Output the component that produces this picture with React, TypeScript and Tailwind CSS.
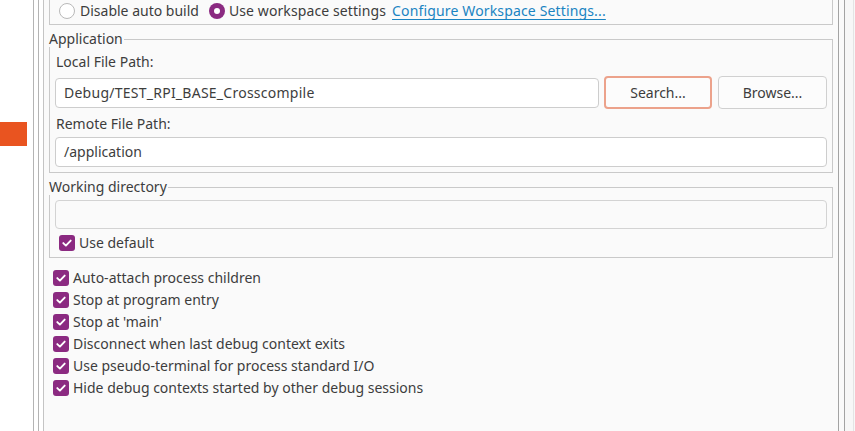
import React from "react";

function Check() {
  return (
    <span className="w-4 h-4 rounded-[3px] bg-[#8b2a81] flex items-center justify-center shrink-0">
      <svg width="12" height="12" viewBox="0 0 12 12">
        <path d="M2.3 6.1 L4.9 8.6 L9.7 3.6" stroke="white" strokeWidth="1.9" fill="none" strokeLinecap="round" strokeLinejoin="round" />
      </svg>
    </span>
  );
}

function CheckRow({ label }: { label: string }) {
  return (
    <div className="h-[22px] flex items-center pl-[4px]">
      <Check />
      <span className="ml-[4px]">{label}</span>
    </div>
  );
}

function GroupLabel({ label }: { label: string }) {
  return (
    <div className="h-[16px] flex">
      <span className="leading-[16px] whitespace-nowrap">{label}</span>
      <div className="flex-1 mt-[8px] ml-[1px] border-t border-r border-[#c9c9c9]" />
    </div>
  );
}

export default function App() {
  return (
    <div className="w-[855px] h-[431px] flex overflow-hidden bg-white text-[14px] leading-[20px] text-[#3d3d3d] font-['Noto_Sans',sans-serif]">
      <div className="w-[33px] shrink-0 bg-white pt-[122px]">
        <div className="w-[27px] h-[24px] bg-[#e95420]" />
      </div>
      <div className="w-px shrink-0 bg-[#b4b4b4]" />
      <div className="w-[4px] shrink-0 bg-white" />
      <div className="w-px shrink-0 bg-[#b4b4b4]" />
      <div className="w-[4px] shrink-0 bg-white" />
      <div className="w-px shrink-0 bg-[#c4c4c4]" />
      <div className="w-[794px] shrink-0 bg-[#fafafa] px-[5px] flex flex-col">
        {/* build settings box (clipped top) */}
        <div className="h-[25px] border-x border-b border-[#c9c9c9] flex items-center pl-[9px] pb-[2px] whitespace-nowrap">
          <span className="w-4 h-4 rounded-full border border-[#b9b9b9] bg-white shrink-0" />
          <span className="ml-[5px]">Disable auto build</span>
          <span className="ml-[10px] w-4 h-4 rounded-full bg-[#8b2a81] flex items-center justify-center shrink-0">
            <span className="w-[6px] h-[6px] rounded-full bg-white" />
          </span>
          <span className="ml-[4px] tracking-[0.1px]">Use workspace settings</span>
          <span className="ml-[6px] tracking-[0.15px] text-[#1a84c2] underline underline-offset-[3px] decoration-[#1a84c2]">
            Configure Workspace Settings...
          </span>
        </div>

        {/* Application */}
        <div className="mt-[6px]">
          <GroupLabel label="Application" />
          <div className="border-x border-b border-[#c9c9c9] pt-[5px] px-[5px] pb-[5px]">
            <div className="pl-[1px]">Local File Path:</div>
            <div className="mt-[4px] h-[33px] flex items-center">
              <div className="flex-1 h-[30px] bg-white border border-[#cdcdcd] rounded-[4px] flex items-center pl-[8px] tracking-[0.25px]">
                Debug/TEST_RPI_BASE_Crosscompile
              </div>
              <div className="ml-[5px] w-[108px] h-[33px] rounded-[4px] border-2 border-[#eca28b] bg-[#fcfcfc] flex items-center justify-center">
                Search...
              </div>
              <div className="ml-[6px] w-[109px] h-[33px] rounded-[4px] border border-[#d0d0d0] bg-[#fcfcfc] flex items-center justify-center">
                Browse...
              </div>
            </div>
            <div className="mt-[5px] pl-[1px]">Remote File Path:</div>
            <div className="mt-[3px] h-[30px] bg-white border border-[#cdcdcd] rounded-[4px] flex items-center pl-[8px]">
              /application
            </div>
          </div>
        </div>

        {/* Working directory */}
        <div className="mt-[6px]">
          <GroupLabel label="Working directory" />
          <div className="border-x border-b border-[#c9c9c9] pt-[5px] px-[5px] pb-[6px]">
            <div className="h-[29px] bg-[#fafafa] border border-[#d3d3d3] rounded-[4px]" />
            <div className="mt-[6px] h-[16px] flex items-center pl-[4px]">
              <Check />
              <span className="ml-[4px]">Use default</span>
            </div>
          </div>
        </div>

        {/* options */}
        <div className="mt-[9px] flex flex-col">
          <CheckRow label="Auto-attach process children" />
          <CheckRow label="Stop at program entry" />
          <CheckRow label="Stop at 'main'" />
          <CheckRow label="Disconnect when last debug context exits" />
          <CheckRow label="Use pseudo-terminal for process standard I/O" />
          <CheckRow label="Hide debug contexts started by other debug sessions" />
        </div>
      </div>
      <div className="w-px shrink-0 bg-[#a3a3a3]" />
      <div className="w-[5px] shrink-0 bg-[#fafafa]" />
      <div className="w-px shrink-0 bg-[#a3a3a3]" />
      <div className="w-[8px] shrink-0 bg-[#f7f7f7]" />
      <div className="w-px shrink-0 bg-[#e4e4e4]" />
      <div className="flex-1 bg-[#f7f7f7]" />
    </div>
  );
}
